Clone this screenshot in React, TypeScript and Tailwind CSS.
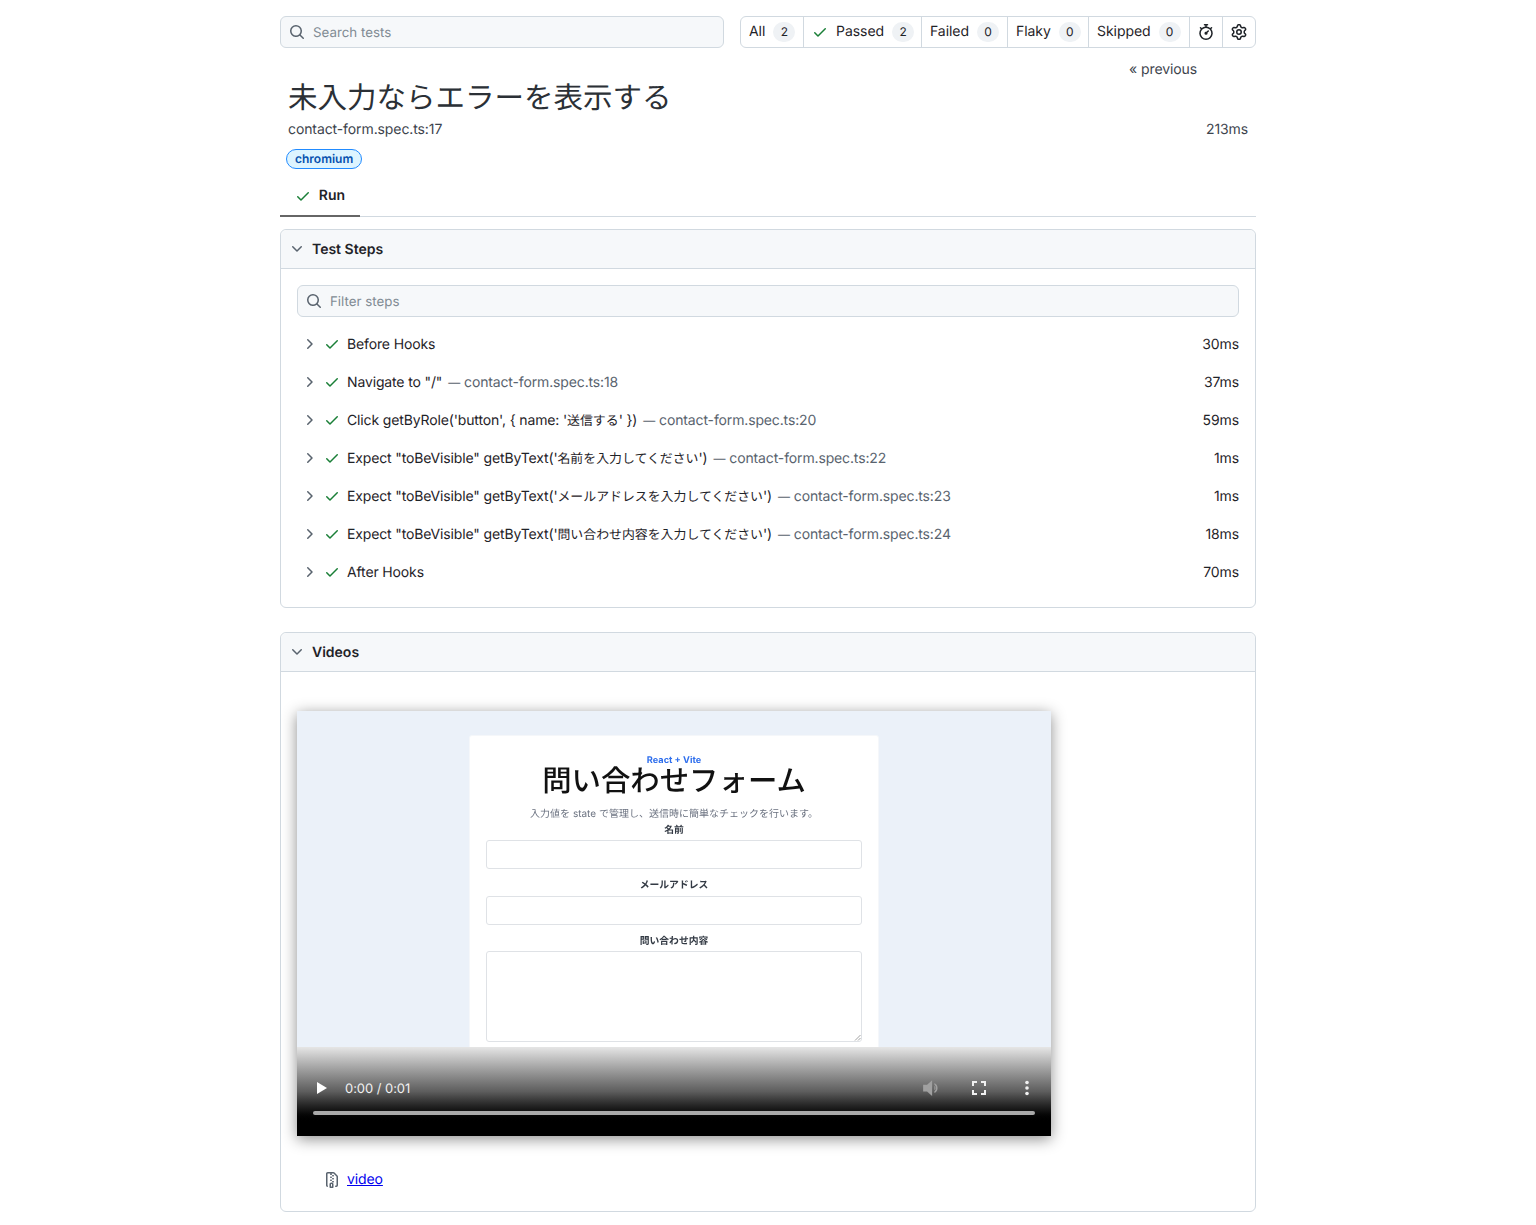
import React from "react";

const searchPath =
  "M10.68 11.74a6 6 0 0 1-7.922-8.982 6 6 0 0 1 8.982 7.922l3.04 3.04a.749.749 0 0 1-.326 1.275.749.749 0 0 1-.734-.215ZM11.5 7a4.499 4.499 0 1 0-8.997 0A4.499 4.499 0 0 0 11.5 7Z";
const checkPath =
  "M13.78 4.22a.75.75 0 0 1 0 1.06l-7.25 7.25a.75.75 0 0 1-1.06 0L2.22 9.28a.751.751 0 0 1 .018-1.042.751.751 0 0 1 1.042-.018L6 10.94l6.72-6.72a.75.75 0 0 1 1.06 0Z";
const chevronDownPath =
  "M12.78 5.22a.749.749 0 0 1 0 1.06l-4.25 4.25a.749.749 0 0 1-1.06 0L3.22 6.28a.749.749 0 1 1 1.06-1.06L8 8.939l3.72-3.719a.749.749 0 0 1 1.06 0Z";
const chevronRightPath =
  "M6.22 3.22a.75.75 0 0 1 1.06 0l4.25 4.25a.75.75 0 0 1 0 1.06l-4.25 4.25a.751.751 0 0 1-1.042-.018.751.751 0 0 1-.018-1.042L9.94 8 6.22 4.28a.75.75 0 0 1 0-1.06Z";
const stopwatchPath =
  "M5.75.75A.75.75 0 0 1 6.5 0h3a.75.75 0 0 1 0 1.5h-.75v1l-.001.041a6.724 6.724 0 0 1 3.464 1.435l.007-.006.75-.75a.75.75 0 1 1 1.06 1.06l-.75.75-.006.007a6.75 6.75 0 1 1-10.548 0L2.72 5.03l-.75-.75a.751.751 0 0 1 .018-1.042.751.751 0 0 1 1.042-.018l.75.75.007.006A6.72 6.72 0 0 1 7.25 2.541V1.5H6.5a.75.75 0 0 1-.75-.75ZM8 14.5a5.25 5.25 0 1 0-.001-10.501A5.25 5.25 0 0 0 8 14.5Zm.389-6.7 1.33-1.33a.75.75 0 1 1 1.061 1.06L9.45 8.861A1.503 1.503 0 0 1 8 10.75a1.499 1.499 0 1 1 .389-2.95Z";
const gearPath =
  "M8 0a8.2 8.2 0 0 1 .701.031C9.444.095 9.99.645 10.16 1.29l.288 1.107c.018.066.079.158.212.224.231.114.454.243.668.386.123.082.233.09.299.071l1.103-.303c.644-.176 1.392.021 1.82.63.27.385.506.792.704 1.218.315.675.111 1.422-.364 1.891l-.814.806c-.049.048-.098.147-.088.294.016.257.016.515 0 .772-.01.147.038.246.088.294l.814.806c.475.469.679 1.216.364 1.891a7.977 7.977 0 0 1-.704 1.217c-.428.61-1.176.807-1.82.63l-1.102-.302c-.067-.019-.177-.011-.3.071a5.909 5.909 0 0 1-.668.386c-.133.066-.194.158-.211.224l-.29 1.106c-.168.646-.715 1.196-1.458 1.26a8.006 8.006 0 0 1-1.402 0c-.743-.064-1.289-.614-1.458-1.26l-.289-1.106c-.018-.066-.079-.158-.212-.224a5.738 5.738 0 0 1-.668-.386c-.123-.082-.233-.09-.299-.071l-1.103.303c-.644.176-1.392-.021-1.82-.63a8.12 8.12 0 0 1-.704-1.218c-.315-.675-.111-1.422.363-1.891l.815-.806c.05-.048.098-.147.088-.294a6.214 6.214 0 0 1 0-.772c.01-.147-.038-.246-.088-.294l-.815-.806C.635 6.045.431 5.298.746 4.623a7.92 7.92 0 0 1 .704-1.217c.428-.61 1.176-.807 1.82-.63l1.102.302c.067.019.177.011.3-.071.214-.143.437-.272.668-.386.133-.066.194-.158.211-.224l.29-1.106C6.009.645 6.556.095 7.299.03 7.53.01 7.764 0 8 0Zm-.571 1.525c-.036.003-.108.036-.137.146l-.289 1.105c-.147.561-.549.967-.998 1.189-.173.086-.34.183-.5.29-.417.278-.97.423-1.529.27l-1.103-.303c-.109-.03-.175.016-.195.045-.22.312-.412.644-.573.99-.014.031-.021.11.059.19l.815.806c.411.406.562.957.53 1.456a4.709 4.709 0 0 0 0 .582c.032.499-.119 1.05-.53 1.456l-.815.806c-.081.08-.073.159-.059.19.162.346.353.677.573.989.02.03.085.076.195.046l1.102-.303c.56-.153 1.113-.008 1.53.27.161.107.328.204.501.29.447.222.85.629.997 1.189l.289 1.105c.029.109.101.143.137.146a6.6 6.6 0 0 0 1.142 0c.036-.003.108-.036.137-.146l.289-1.105c.147-.561.549-.967.998-1.189.173-.086.34-.183.5-.29.417-.278.97-.423 1.529-.27l1.103.303c.109.029.175-.016.195-.045.22-.313.411-.644.573-.99.014-.031.021-.11-.059-.19l-.815-.806c-.411-.406-.562-.957-.53-1.456a4.709 4.709 0 0 0 0-.582c-.032-.499.119-1.05.53-1.456l.815-.806c.081-.08.073-.159.059-.19a6.464 6.464 0 0 0-.573-.989c-.02-.03-.085-.076-.195-.046l-1.102.303c-.56.153-1.113.008-1.53-.27a4.44 4.44 0 0 0-.501-.29c-.447-.222-.85-.629-.997-1.189l-.289-1.105c-.029-.11-.101-.143-.137-.146a6.6 6.6 0 0 0-1.142 0ZM11 8a3 3 0 1 1-6 0 3 3 0 0 1 6 0ZM9.5 8a1.5 1.5 0 1 0-3.001.001A1.5 1.5 0 0 0 9.5 8Z";
const fileZipPath =
  "M3.5 1.75v11.5c0 .09.048.173.126.217a.75.75 0 0 1-.752 1.298A1.748 1.748 0 0 1 2 13.25V1.75C2 .784 2.784 0 3.75 0h5.586c.464 0 .909.185 1.237.513l2.914 2.914c.329.328.513.773.513 1.237v8.586A1.75 1.75 0 0 1 12.25 15h-.5a.75.75 0 0 1 0-1.5h.5a.25.25 0 0 0 .25-.25V4.664a.25.25 0 0 0-.073-.177L9.513 1.573a.25.25 0 0 0-.177-.073H7.25a.75.75 0 0 1 0 1.5h-.5a.75.75 0 0 1 0-1.5h-3a.25.25 0 0 0-.25.25Zm3.75 8.75h.5c.966 0 1.75.784 1.75 1.75v3a.75.75 0 0 1-.75.75h-2.5a.75.75 0 0 1-.75-.75v-3c0-.966.784-1.75 1.75-1.75ZM6 5.25a.75.75 0 0 1 .75-.75h.5a.75.75 0 0 1 0 1.5h-.5A.75.75 0 0 1 6 5.25Zm.75 2.25h.5a.75.75 0 0 1 0 1.5h-.5a.75.75 0 0 1 0-1.5ZM8 6.75A.75.75 0 0 1 8.75 6h.5a.75.75 0 0 1 0 1.5h-.5A.75.75 0 0 1 8 6.75ZM8.75 3h.5a.75.75 0 0 1 0 1.5h-.5a.75.75 0 0 1 0-1.5ZM8 9.75A.75.75 0 0 1 8.75 9h.5a.75.75 0 0 1 0 1.5h-.5A.75.75 0 0 1 8 9.75Zm-1 2.5v2.25h1v-2.25a.25.25 0 0 0-.25-.25h-.5a.25.25 0 0 0-.25.25Z";

function Icon({ d, className }: { d: string; className?: string }) {
  return (
    <svg viewBox="0 0 16 16" width="16" height="16" fill="currentColor" className={className}>
      <path d={d} />
    </svg>
  );
}

function SearchBox({ placeholder }: { placeholder: string }) {
  return (
    <div className="flex h-8 items-center rounded-md border border-[#d1d9e0] bg-[#f6f8fa] pl-2 text-[#59636e]">
      <Icon d={searchPath} className="shrink-0" />
      <span className="ml-2 pt-[4px] text-[13.33px] text-[#818b94]">{placeholder}</span>
    </div>
  );
}

function Counter({ n }: { n: number }) {
  return (
    <span className="ml-2 flex h-5 min-w-[22px] items-center justify-center rounded-full bg-[#eff2f5] px-1.5 text-xs text-[#1f2328]">
      {n}
    </span>
  );
}

const filters = [
  { label: "All", n: 2, check: false, cls: "w-[63px]" },
  { label: "Passed", n: 2, check: true, cls: "w-[118px]" },
  { label: "Failed", n: 0, check: false, cls: "w-[86px]" },
  { label: "Flaky", n: 0, check: false, cls: "w-[81px]" },
  { label: "Skipped", n: 0, check: false, cls: "w-[101px]" },
];

type Step = { title: string; cjk?: string; tail?: string; loc?: string; ms: string };

const steps: Step[] = [
  { title: "Before Hooks", ms: "30ms" },
  { title: 'Navigate to "/"', loc: "contact-form.spec.ts:18", ms: "37ms" },
  { title: "Click getByRole('button', { name: '", cjk: "送信する", tail: "' })", loc: "contact-form.spec.ts:20", ms: "59ms" },
  { title: "Expect \"toBeVisible\" getByText('", cjk: "名前を入力してください", tail: "')", loc: "contact-form.spec.ts:22", ms: "1ms" },
  { title: "Expect \"toBeVisible\" getByText('", cjk: "メールアドレスを入力してください", tail: "')", loc: "contact-form.spec.ts:23", ms: "1ms" },
  { title: "Expect \"toBeVisible\" getByText('", cjk: "問い合わせ内容を入力してください", tail: "')", loc: "contact-form.spec.ts:24", ms: "18ms" },
  { title: "After Hooks", ms: "70ms" },
];

function Chip({ title, children }: { title: string; children: React.ReactNode }) {
  return (
    <section className="rounded-md border border-[#d1d9e0]">
      <div className="flex h-[39px] items-center rounded-t-md border-b border-[#d1d9e0] bg-[#f6f8fa] pl-2 font-semibold">
        <Icon d={chevronDownPath} className="text-[#59636e]" />
        <span className="ml-[7px] pt-px">{title}</span>
      </div>
      {children}
    </section>
  );
}

function VideoFrame() {
  return (
    <div className="relative h-[425px] w-[754px] overflow-hidden bg-[#ebf1f9] shadow-[0_3px_14px_rgba(0,0,0,0.45)]">
      <div className="mx-auto mt-6 h-[420px] w-[410px] rounded-[3px] border border-[#f5f7fa] bg-white px-4 pt-[18px] text-center blur-[0.3px]">
        <div className="h-[13px] text-[9.2px] leading-[13px] font-bold text-[#2f6fed]">React + Vite</div>
        <div className="-mt-[3px] h-[36px] text-[29.4px] leading-[36px] font-medium text-[#111111]">問い合わせフォーム</div>
        <div className="mt-[7px] h-[15px] text-[10px] leading-[15px] text-[#6b7280]">入力値を state で管理し、送信時に簡単なチェックを行います。</div>
        <div className="mt-[1px] h-[15px] text-[9.8px] leading-[15px] font-semibold text-[#333a44]">名前</div>
        <div className="mt-[2px] h-[29px] rounded-[3px] border border-[#dfe2e6]" />
        <div className="mt-[9px] h-[15px] text-[9.8px] leading-[15px] font-semibold text-[#333a44]">メールアドレス</div>
        <div className="mt-[3px] h-[29px] rounded-[3px] border border-[#dfe2e6]" />
        <div className="mt-[9px] h-[15px] text-[9.8px] leading-[15px] font-semibold text-[#333a44]">問い合わせ内容</div>
        <div className="mt-[2px] flex h-[91px] items-end justify-end rounded-[3px] border border-[#dfe2e6]">
          <svg viewBox="0 0 7 7" width="7" height="7" fill="none" stroke="#8a8a8a" strokeWidth="0.8">
            <path d="M1 6.5L6.5 1M4 6.5L6.5 4" />
          </svg>
        </div>
      </div>
      {/* native video controls lie over the frame */}
      <div className="absolute inset-x-0 bottom-0 h-[89px] bg-gradient-to-b from-[#e6e6e6] via-[#5e5e5e] to-black to-[85%] text-white">
        <div className="flex h-[50px] items-end pl-[20px]">
          <svg viewBox="0 0 10 12" width="10" height="12" fill="#ffffff" className="mb-[3px]">
            <path d="M0 0l10 6-10 6z" />
          </svg>
          <span className="-mb-px ml-[18px] text-[13px] leading-[18px] tracking-[-0.05px] text-[#f1f1f1]">0:00 / 0:01</span>
          <div className="ml-auto flex items-center">
            <svg viewBox="0 0 16 16" width="18" height="18" fill="#a0a0a0">
              <path d="M1 5h3.5L9 1v14l-4.5-4H1zM11 3.5a5 5 0 0 1 0 9v-1.6a3.5 3.5 0 0 0 0-5.8zM11 6a2.4 2.4 0 0 1 0 4z" />
            </svg>
            <svg viewBox="0 0 14 14" width="14" height="14" fill="none" stroke="#f1f1f1" strokeWidth="2" className="ml-[32px]">
              <path d="M1 5V1h4M9 1h4v4M13 9v4H9M5 13H1V9" />
            </svg>
            <svg viewBox="0 0 4 16" width="4" height="16" fill="#f1f1f1" className="ml-[39px] mr-[22px]">
              <circle cx="2" cy="2.5" r="1.8" />
              <circle cx="2" cy="8" r="1.8" />
              <circle cx="2" cy="13.5" r="1.8" />
            </svg>
          </div>
        </div>
        <div className="mx-4 mt-[14px] h-1 rounded-full bg-[#a9a9a9]" />
      </div>
    </div>
  );
}

export default function App() {
  return (
    <div className="min-h-[1225px] bg-white font-['Inter','Noto_Sans_CJK_JP',sans-serif] text-sm text-[#1f2328] [text-rendering:geometricPrecision]">
      <div className="mx-auto w-[976px] pt-4">
        <div className="flex gap-4">
          <div className="flex-1">
            <SearchBox placeholder="Search tests" />
          </div>
          <nav className="flex h-8 w-[516px] rounded-md border border-[#d1d9e0]">
            {filters.map((f) => (
              <div key={f.label} className={`flex items-center border-r border-[#d1d9e0] pl-2 tracking-[-0.05px] ${f.cls}`}>
                {f.check && <Icon d={checkPath} className="mr-2 text-[#1a7f37]" />}
                {f.label}
                <Counter n={f.n} />
              </div>
            ))}
            <div className="flex w-[33px] items-center justify-center border-r border-[#d1d9e0]">
              <Icon d={stopwatchPath} />
            </div>
            <div className="flex flex-1 items-center justify-center">
              <Icon d={gearPath} />
            </div>
          </nav>
        </div>

        <div className="mt-[14px] flex h-4 justify-end pr-[59px] leading-4 tracking-[-0.1px] text-[#3d444d]">« previous</div>

        <h1 className="h-10 pl-2 text-[29.5px] leading-10 font-normal text-[#2b3036]">未入力ならエラーを表示する</h1>
        <div className="mt-[2px] flex justify-between px-2 tracking-[-0.1px] text-[#3d444d]">
          <span>contact-form.spec.ts:17</span>
          <span>213ms</span>
        </div>
        <div className="mt-[9px] flex pl-[6px]">
          <span className="flex h-[20px] items-center rounded-full border border-[#218bff] bg-[#ddf4ff] px-2 text-xs font-semibold text-[#0550ae]">
            chromium
          </span>
        </div>

        <div className="mt-[7px] flex h-[41px] border-b border-[#d1d9e0]">
          <div className="-mb-px flex w-20 items-center justify-center border-b-2 border-[#666666] font-semibold">
            <Icon d={checkPath} className="mr-2 text-[#1a7f37]" />
            Run
          </div>
        </div>

        <div className="mt-3">
          <Chip title="Test Steps">
            <div className="px-4 pt-4 pb-4">
              <SearchBox placeholder="Filter steps" />
              <div className="mt-2">
                {steps.map((s) => (
                  <div key={s.ms + s.title + (s.cjk ?? "")} className="flex h-[38px] items-center pl-[5px]">
                    <Icon d={chevronRightPath} className="-ml-px text-[#59636e]" />
                    <Icon d={checkPath} className="ml-[7px] text-[#1a7f37]" />
                    <span className="ml-[7px] h-5 pt-px leading-5 tracking-[-0.14px] whitespace-pre">
                      {s.title}
                      {s.cjk && <span className="text-[12.9px] leading-none tracking-normal">{s.cjk}</span>}
                      {s.tail}
                    </span>
                    {s.loc && (
                      <span className="ml-[6px] h-5 pt-px leading-5 tracking-[-0.14px] text-[#59636e]">
                        <span className="text-[12px] leading-none tracking-normal">—</span> {s.loc}
                      </span>
                    )}
                    <span className="ml-auto h-5 pt-px leading-5 tracking-[-0.1px]">{s.ms}</span>
                  </div>
                ))}
              </div>
            </div>
          </Chip>
        </div>

        <div className="mt-6">
          <Chip title="Videos">
            <div className="px-4 pt-[39px] pb-[21px]">
              <VideoFrame />
              <div className="mt-[34px] flex h-5 items-center pl-[27px]">
                <Icon d={fileZipPath} className="text-[#59636e]" />
                <a href="#video" className="ml-[7px] tracking-[-0.1px] text-[#0000ee] underline">
                  video
                </a>
              </div>
            </div>
          </Chip>
        </div>
      </div>
    </div>
  );
}
